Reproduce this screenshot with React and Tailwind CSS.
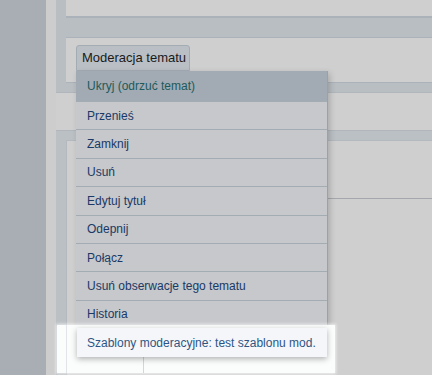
import React from 'react';

const items = [
    'Przenieś',
    'Zamknij',
    'Usuń',
    'Edytuj tytuł',
    'Odepnij',
    'Połącz',
    'Usuń obserwacje tego tematu',
    'Historia',
];

export default function App() {
    return (
        <div className="relative w-[432px] h-[375px] overflow-hidden flex bg-[#cfcfcf] font-['Liberation_Sans',Arial,sans-serif]">
            {/* side strips */}
            <div className="w-[46px] shrink-0 bg-[#a9aeb5]" />
            <div className="w-[10px] shrink-0 bg-[#cdcdcd]" />

            {/* content column */}
            <div className="flex-1 flex flex-col">
                {/* top panel */}
                <div className="bg-[#b9bec3] pl-[10px] pb-[9px] border-b border-[#b0b6bc]">
                    <div className="h-[18px] bg-[#cfcfcf] border-b-2 border-[#abb2b9]" />
                    <div className="h-[19px]" />
                    <div className="h-[46px] bg-[#cfcfcf] border-y border-[#abb2b9] pl-[10px] pt-[7px]">
                        <div className="w-[114px] h-[26px] bg-[#b9bfc5] border border-[#a4acb3] rounded-t-[3px] pl-[5px] pt-[4px] text-[13px] leading-[16px] text-[#1a1a1a]">
                            Moderacja tematu
                        </div>
                    </div>
                </div>

                <div className="h-[37px]" />

                {/* lower panel */}
                <div className="flex-1 bg-[#bbc0c5] pl-[10px] pt-[9px] border-t border-[#b0b6bc]">
                    <div className="h-full bg-[#cfcfcf] border-t border-l border-[#b3b9bf] flex flex-col">
                        <div className="h-[47px]" />
                        <div className="flex">
                            <div className="w-[9px]" />
                            <div className="w-px h-[54px] bg-[#9a9fa5]" />
                        </div>
                    </div>
                </div>
            </div>

            {/* faint line in lower box */}
            <div className="absolute left-[327px] top-[198px] w-[105px] h-px bg-[#a4a8ac]" />

            {/* dropdown menu */}
            <div className="absolute left-[76px] top-[71px] w-[252px] bg-[#c6c8cb] border-r border-[#9aa2a9] shadow-[2px_2px_6px_rgba(0,0,0,0.18)] text-[12px]">
                <div className="h-[30px] flex items-center pl-[11px] bg-[#a2abb3] text-[#1e5a5b]">
                    Ukryj (odrzuć temat)
                </div>
                {items.map((label) => (
                    <div
                        key={label}
                        className="h-[28.4px] flex items-center pl-[11px] border-t border-[#a3abb3] text-[#1a3966]"
                    >
                        {label}
                    </div>
                ))}
                <div className="h-[29px]" />
            </div>

            {/* spotlight around highlighted entry */}
            <div className="absolute left-[57px] top-[325px] w-[278px] h-[48px] bg-[#fbfcfc] shadow-[0_0_3px_1px_rgba(255,255,255,0.7)]">
                <div className="absolute left-[9px] top-0 bottom-0 w-px bg-[#e1e5e8]" />
                <div className="absolute left-[86px] top-[32px] bottom-0 w-px bg-[#d3d7da]" />
            </div>

            {/* highlighted menu entry */}
            <div className="absolute left-[77px] top-[328px] w-[250px] h-[29px] flex items-center pl-[10px] bg-[#f4f6f9] shadow-[0_2px_6px_rgba(0,0,0,0.3)] text-[12px] text-[#2d5584]">
                Szablony moderacyjne: test szablonu mod.
            </div>
        </div>
    );
}
